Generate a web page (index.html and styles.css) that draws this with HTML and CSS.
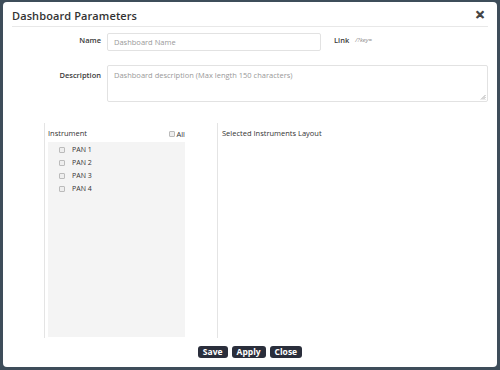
FILE: index.html
```html
<!DOCTYPE html>
<html>
<head>
<meta charset="utf-8">
<link rel="stylesheet" href="styles.css">
</head>
<body>
<div class="modal">
  <div class="header">
    <div class="title">Dashboard Parameters</div>
    <div class="close">&#x2715;</div>
  </div>
  <div class="row name-row">
    <label class="lbl">Name</label>
    <div class="input">Dashboard Name</div>
    <span class="link-lbl">Link</span>
    <span class="link-val">/?key=</span>
  </div>
  <div class="row desc-row">
    <label class="lbl">Description</label>
    <div class="textarea">Dashboard description (Max length 150 characters)
      <svg class="grip" width="6" height="6" viewBox="0 0 6 6"><path d="M1 5.5L5.5 1M3 5.5L5.5 3M5 5.5L5.5 5" stroke="#999" stroke-width="0.8"/></svg>
    </div>
  </div>
  <div class="panels">
    <div class="left">
      <div class="left-head">
        <span>Instrument</span>
        <span class="all"><span class="cb"></span>All</span>
      </div>
      <div class="list">
        <div class="item"><span class="cb"></span>PAN 1</div>
        <div class="item"><span class="cb"></span>PAN 2</div>
        <div class="item"><span class="cb"></span>PAN 3</div>
        <div class="item"><span class="cb"></span>PAN 4</div>
      </div>
    </div>
    <div class="right">Selected Instruments Layout</div>
  </div>
  <div class="footer">
    <button class="btn">Save</button>
    <button class="btn">Apply</button>
    <button class="btn">Close</button>
  </div>
</div>
</body>
</html>
```
FILE: styles.css
```css
html, body { margin: 0; padding: 0; }
body {
  background: #3e4d5a;
  width: 500px;
  height: 370px;
  overflow: hidden;
  font-family: "Open Sans", "DejaVu Sans", sans-serif;
  color: #333;
}
.modal {
  margin: 2px 3px 0 3px;
  height: 365px;
  background: #fff;
  border-radius: 4px;
  box-sizing: border-box;
  position: relative;
}
.header {
  margin: 0 9px;
  height: 24px;
  border-bottom: 1px solid #e8e8e8;
  display: flex;
  align-items: center;
  justify-content: space-between;
}
.title {
  font-size: 11px;
  font-weight: 600;
  color: #333;
  letter-spacing: 0.1px;
  padding-top: 2px;
}
.close {
  font-size: 12px;
  font-weight: 700;
  color: #444;
  margin-right: 3px;
  padding-top: 1px;
  -webkit-text-stroke: 0.9px #444;
}
.row { display: flex; align-items: flex-start; }
.lbl {
  width: 98px;
  text-align: right;
  font-size: 7.5px;
  font-weight: 600;
  color: #3a3a3a;
  flex: none;
}
.name-row { margin-top: 6px; height: 18px; align-items: center; }
.name-row .lbl { margin-top: -4px; }
.input {
  margin-left: 6px;
  width: 214px;
  height: 18px;
  box-sizing: border-box;
  border: 1px solid #e2e2e2;
  border-radius: 2px;
  font-size: 7.5px;
  color: #999;
  padding-left: 6px;
  line-height: 16px;
}
.link-lbl {
  margin-left: 13px;
  font-size: 7.5px;
  font-weight: 600;
  color: #3a3a3a;
  margin-top: -4px;
}
.link-val {
  margin-left: 6px;
  font-size: 6px;
  font-style: italic;
  color: #888;
  margin-top: -4px;
}
.desc-row { margin-top: 14px; }
.desc-row .lbl { margin-top: 5px; }
.textarea {
  margin-left: 6px;
  width: 381px;
  height: 37px;
  box-sizing: border-box;
  border: 1px solid #e2e2e2;
  border-radius: 2px;
  font-size: 7.5px;
  color: #999;
  padding: 4px 6px;
  position: relative;
}
.grip { position: absolute; right: 1px; bottom: 1px; }
.panels {
  display: flex;
  margin-top: 21px;
  margin-left: 41px;
  height: 215px;
}
.left {
  width: 174px;
  border-left: 1px solid #e4e4e4;
  border-right: 1px solid #e4e4e4;
  padding-left: 3px;
  box-sizing: border-box;
}
.left-head {
  width: 137px;
  display: flex;
  justify-content: space-between;
  align-items: center;
  font-size: 7.5px;
  color: #333;
  height: 19px;
}
.all { display: flex; align-items: center; margin-top: 2px; }
.all .cb { margin-right: 1px; }
.cb {
  display: inline-block;
  width: 6px;
  height: 6px;
  border: 1px solid #bbb;
  border-radius: 1px;
  background: #eee;
  box-sizing: border-box;
}
.list {
  width: 137px;
  height: 195px;
  background: #f4f4f4;
  box-sizing: border-box;
  padding-top: 1px;
}
.item {
  display: flex;
  align-items: center;
  height: 13px;
  font-size: 7px;
  color: #333;
  padding-left: 11px;
}
.item .cb { margin-right: 7px; }
.right {
  padding-left: 4px;
  padding-top: 5px;
  font-size: 7.5px;
  color: #333;
}
.footer {
  display: flex;
  justify-content: center;
  gap: 4px;
  margin-top: 8px;
}
.btn {
  background: #2a2e3b;
  color: #fff;
  border: none;
  border-radius: 3px;
  font-family: "Open Sans", "DejaVu Sans", sans-serif;
  font-size: 8.5px;
  font-weight: 700;
  height: 12px;
  line-height: 12px;
  padding: 0 5px;
}
```
